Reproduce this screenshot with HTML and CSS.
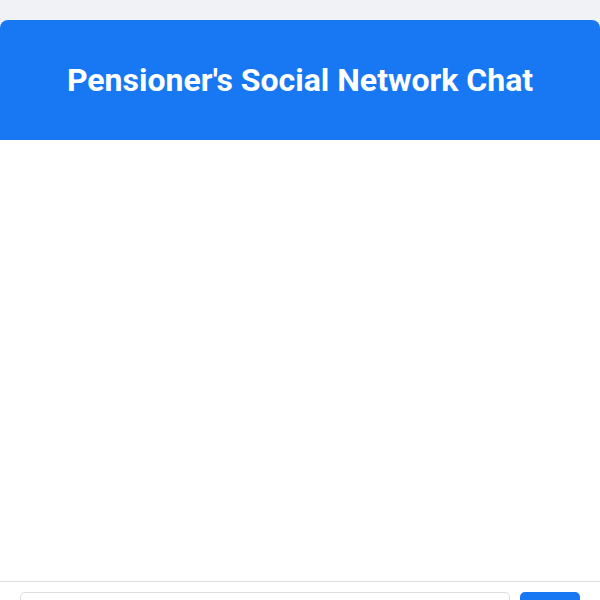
FILE: index.html
```html
<!DOCTYPE html>
<html lang="en">
<head>
<meta charset="utf-8">
<title>Pensioner's Social Network Chat</title>
<link rel="stylesheet" href="styles.css">
</head>
<body>
<div class="chat">
  <header class="chat-header">
    <h1 class="chat-title">Pensioner's Social Network Chat</h1>
  </header>
  <div class="chat-messages"></div>
  <form class="chat-form">
    <input class="chat-input" type="text" aria-label="Message">
    <button class="chat-send" type="button">Send</button>
  </form>
</div>
</body>
</html>
```

FILE: styles.css
```css
html, body {
  margin: 0;
  padding: 0;
}
body {
  background: #f0f2f5;
  font-family: Roboto, "Liberation Sans", sans-serif;
}
.chat {
  margin-top: 20px;
  background: #fff;
  border-radius: 8px;
  overflow: hidden;
  display: flex;
  flex-direction: column;
}
.chat-header {
  background: #1877f2;
  height: 120px;
  display: flex;
  align-items: center;
  justify-content: center;
}
.chat-title {
  margin: 0;
  color: #fff;
  font-size: 32px;
  font-weight: 700;
}
.chat-messages {
  height: 441px;
}
.chat-form {
  border-top: 1px solid #ddd;
  padding: 10px 20px;
  display: flex;
  gap: 10px;
  margin: 0;
}
.chat-input {
  flex: 1;
  height: 40px;
  box-sizing: border-box;
  border: 1px solid #ddd;
  border-radius: 5px;
  padding: 0 10px;
  font-size: 16px;
}
.chat-send {
  width: 60px;
  height: 40px;
  border: none;
  border-radius: 5px;
  background: #1877f2;
  color: #fff;
  font-size: 16px;
  font-family: inherit;
}
```
